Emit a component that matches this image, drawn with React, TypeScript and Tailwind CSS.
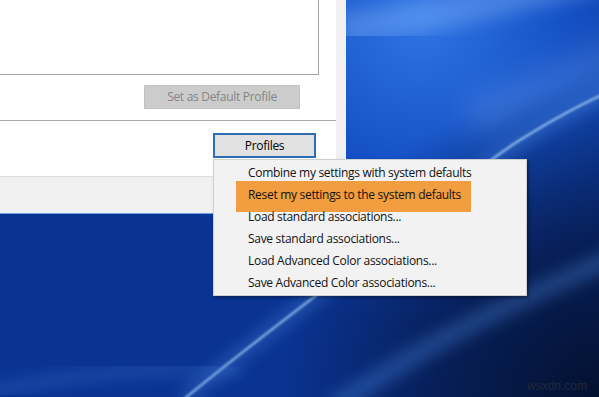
import React from "react";

const menuItems = [
  "Combine my settings with system defaults",
  "Reset my settings to the system defaults",
  "Load standard associations...",
  "Save standard associations...",
  "Load Advanced Color associations...",
  "Save Advanced Color associations...",
];

function Wallpaper() {
  return (
    <svg className="absolute inset-0" width="599" height="397" viewBox="0 0 599 397">
      <defs>
        <radialGradient id="glow" cx="420" cy="20" r="300" gradientUnits="userSpaceOnUse">
          <stop offset="0" stopColor="#2f74e4" />
          <stop offset="0.5" stopColor="#1450c4" />
          <stop offset="1" stopColor="#1450c4" stopOpacity="0" />
        </radialGradient>
        <radialGradient id="dark" cx="610" cy="410" r="330" gradientUnits="userSpaceOnUse">
          <stop offset="0" stopColor="#030f2a" />
          <stop offset="0.5" stopColor="#061a4a" stopOpacity="0.85" />
          <stop offset="1" stopColor="#061a4a" stopOpacity="0" />
        </radialGradient>
        <filter id="blurS">
          <feGaussianBlur stdDeviation="1.1" />
        </filter>
        <filter id="blurL">
          <feGaussianBlur stdDeviation="8" />
        </filter>
        <filter id="blurXL" x="-50%" y="-50%" width="200%" height="200%">
          <feGaussianBlur stdDeviation="16" />
        </filter>
      </defs>
      <rect width="599" height="397" fill="#0a3392" />
      <rect width="599" height="397" fill="url(#glow)" />
      <rect width="599" height="397" fill="url(#dark)" />
      <path d="M 340 30 C 420 20 500 0 620 -30" stroke="#9cc8ff" strokeOpacity="0.3" strokeWidth="34" fill="none" filter="url(#blurL)" />
      <path d="M 470 120 C 530 95 580 70 640 50" stroke="#9cc8ff" strokeOpacity="0.22" strokeWidth="40" fill="none" filter="url(#blurXL)" />
      <path d="M 183 400 C 250 345 300 308 360 262 S 480 165 520 140 S 575 108 620 86" stroke="#5d9df2" strokeOpacity="0.35" strokeWidth="12" fill="none" filter="url(#blurL)" />
      <path d="M 183 400 C 250 345 300 308 360 262 S 480 165 520 140 S 575 108 620 86" stroke="#b4d8ff" strokeOpacity="0.75" strokeWidth="2.2" fill="none" filter="url(#blurS)" />
      <path d="M 330 410 C 400 360 480 315 620 255" stroke="#4f8fe8" strokeOpacity="0.35" strokeWidth="18" fill="none" filter="url(#blurL)" />
      <path d="M -10 392 C 70 375 150 366 240 370" stroke="#4f8fe8" strokeOpacity="0.3" strokeWidth="10" fill="none" filter="url(#blurL)" />
    </svg>
  );
}

export default function App() {
  return (
    <div className="relative w-[599px] h-[397px] overflow-hidden bg-[#0a3392] font-['Open_Sans','Noto_Sans',sans-serif] text-[12px] tracking-[-0.3px] text-black">
      <Wallpaper />

      <div className="relative flex flex-col w-[346px]">
        <div className="flex h-[176px]">
          <div className="flex flex-col w-[336px] bg-white">
            <div className="w-[319px] h-[75px] border-r border-b border-[#a3a3a3]" />
            <div className="flex justify-end pr-[36px] mt-[10px]">
              <div className="flex items-center justify-center w-[156px] h-[24px] bg-[#cccccc] border border-[#c2c2c2] text-[#858585]">
                Set as Default Profile
              </div>
            </div>
            <div className="h-px bg-[#a8a8a8] mt-[11px]" />
            <div className="flex justify-end pr-[20px] mt-[12px]">
              <div className="flex items-center justify-center w-[103px] h-[25px] bg-[#e1e1e1] border-2 border-[#2d6db3]">
                Profiles
              </div>
            </div>
          </div>
          <div className="flex-1 bg-[#f0f0f0]" />
        </div>
        <div className="h-[37px] bg-[#f0f0f0] border-t border-[#dedede]" />
        <div className="h-px bg-[#6f9fe6]" />
      </div>

      <div className="absolute left-[213px] top-[159px] w-[314px] h-[137px] bg-[#f2f2f2] border border-[#cfcfcf] shadow-[2px_2px_3px_rgba(0,0,0,0.35)] pt-[2px]">
        <div className="absolute left-[22px] top-[21px] w-[235px] h-[31px] bg-[#f29d3f]" />
        <div className="relative flex flex-col">
          {menuItems.map((item) => (
            <div key={item} className="flex items-center h-[22px] pl-[34px] text-[#111]">
              {item}
            </div>
          ))}
        </div>
      </div>

      <div className="absolute left-[527px] top-[380px] text-[12px] leading-none tracking-normal text-[#23283a] font-['Liberation_Sans',sans-serif]">
        wsxdn.com
      </div>
    </div>
  );
}
